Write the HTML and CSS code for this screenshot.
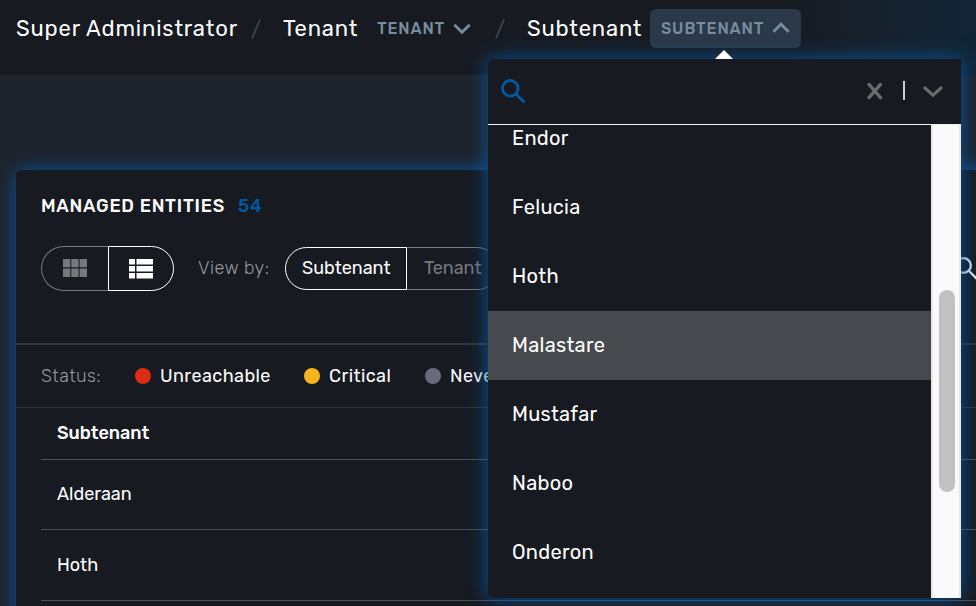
FILE: index.html
```html
<!DOCTYPE html>
<html lang="en">
<head>
<meta charset="utf-8">
<title>Managed Entities</title>
<link rel="stylesheet" href="styles.css">
</head>
<body>
<div class="app">
  <header class="crumbs">
    <span class="crumb crumb-admin">Super Administrator</span>
    <svg class="slash slash-first" viewBox="0 0 10 20"><path d="M1 19.5L9 .5"/></svg>
    <span class="crumb crumb-tenant">Tenant</span>
    <button class="switch switch-tenant"><span class="switch-label label-tenant">TENANT</span><svg viewBox="0 0 16 11"><path d="M1 1.5L8 8.5L15 1.5"/></svg></button>
    <svg class="slash slash-second" viewBox="0 0 10 20"><path d="M1 19.5L9 .5"/></svg>
    <span class="crumb crumb-subtenant">Subtenant</span>
    <button class="switch switch-open"><span class="switch-label label-subtenant">SUBTENANT</span><svg viewBox="0 0 16 11"><path d="M1 9L8 2L15 9"/></svg></button>
  </header>
  <main class="content">
    <section class="panel">
      <div class="panel-head">
        <h1 class="title"><span class="title-text">MANAGED ENTITIES</span><span class="count">54</span></h1>
        <div class="toolbar">
          <div class="toggle view-toggle">
            <button class="left"><svg viewBox="0 0 24 20"><path d="M0 0h7.3v8.3H0zM8.3 0h7.3v8.3H8.3zM16.6 0H24v8.3h-7.4zM0 9.5h7.3V18H0zM8.3 9.5h7.3V18H8.3zM16.6 9.5H24V18h-7.4z"/></svg></button>
            <button class="right active"><svg viewBox="0 0 24 20"><path d="M0 0h6v5.5H0zM7.5 0H24v5.5H7.5zM0 7h6v5.5H0zM7.5 7H24v5.5H7.5zM0 14h6v5.5H0zM7.5 14H24v5.5H7.5z"/></svg></button>
          </div>
          <span class="viewby">View by:</span>
          <div class="toggle group-toggle">
            <button class="left active"><span class="group-subtenant">Subtenant</span></button>
            <button class="right"><span class="group-tenant">Tenant</span></button>
          </div>
          <svg class="panel-search" viewBox="0 0 24 24"><circle cx="8.5" cy="8.5" r="7.3"/><path d="M14 14L22 22"/></svg>
        </div>
      </div>
      <div class="status">
        <span class="status-title">Status:</span>
        <span class="dot red"></span><span class="status-name unreachable">Unreachable</span>
        <span class="dot amber"></span><span class="status-name critical">Critical</span>
        <span class="dot grey"></span><span class="status-name">Never</span>
      </div>
      <div class="table">
        <div class="row head"><span class="cell-head">Subtenant</span></div>
        <div class="row first"><span class="cell-alderaan">Alderaan</span></div>
        <div class="row"><span class="cell-hoth">Hoth</span></div>
      </div>
    </section>
  </main>
  <div class="dropdown">
    <i class="arrow"></i>
    <div class="search-row">
      <svg class="search" viewBox="0 0 25 25"><circle cx="9.3" cy="9.3" r="7.8"/><path d="M15 15L23.5 23.5"/></svg>
      <svg class="clear" viewBox="0 0 16 18"><path d="M2 2.4L13.5 15.6M13.5 2.4L2 15.6"/></svg>
      <i class="divider"></i>
      <svg class="chevron" viewBox="0 0 20 12"><path d="M2 2L10 9.2L18 2"/></svg>
    </div>
    <div class="list">
      <ul class="options">
        <li><span>Endor</span></li>
        <li><span>Felucia</span></li>
        <li><span>Hoth</span></li>
        <li class="selected"><span>Malastare</span></li>
        <li><span>Mustafar</span></li>
        <li><span>Naboo</span></li>
        <li><span>Onderon</span></li>
      </ul>
      <div class="track"><div class="thumb"></div></div>
    </div>
  </div>
</div>
</body>
</html>
```
FILE: styles.css
```css
* { box-sizing: border-box; }
body { margin: 0; background: #1f232b; color: #fff; font-family: Rubik, Roboto, sans-serif; }
button { margin: 0; padding: 0; border: 0; background: none; color: inherit; font: inherit; }
svg { display: block; flex: none; fill: none; }
.app { position: relative; width: 976px; height: 606px; overflow: hidden; }
.crumbs { display: flex; align-items: center; height: 75px; padding: 0 0 19px 16px; background: linear-gradient(90deg, #171a21 0 81%, #17202a 88%, #122537 100%); white-space: nowrap; }
.crumb { flex: none; padding-top: 2px; font-size: 22px; line-height: 28px; }
.crumb-admin { width: 235px; letter-spacing: .84px; }
.slash { width: 10px; height: 20px; margin-top: 2px; stroke: #45484d; stroke-width: 1.6; }
.slash-first { margin-right: 22px; }
.crumb-tenant { width: 94px; letter-spacing: .84px; }
.switch { display: flex; flex: none; align-items: center; color: #778da0; font-size: 16px; font-weight: 500; }
.switch-label { flex: none; letter-spacing: .85px; text-align: left; }
.switch svg { width: 18px; height: 12px; stroke: #778da0; stroke-width: 2.6; }
.label-tenant { width: 76px; }
.switch-tenant { width: 118px; }
.switch-tenant svg { margin-top: 2px; }
.slash-second { margin-right: 22px; }
.crumb-subtenant { width: 123px; letter-spacing: .8px; }
.switch-open { width: 151px; height: 39px; padding-left: 11px; border-radius: 6px; background: #2b3848; }
.label-subtenant { width: 111px; }
.content { padding: 95px 0 0 16px; }
.panel { width: 980px; height: 460px; border-radius: 6px 0 0; background: #171a21; box-shadow: 0 0 20px #07569f; }
.panel-head { height: 175px; padding: 25px 0 0 25px; border-bottom: 2px solid #33363b; }
.title { display: flex; margin: 0; height: 22px; align-items: center; font-size: 18px; font-weight: 500; }
.title-text { width: 197px; letter-spacing: .76px; }
.count { color: #0457a1; letter-spacing: .8px; }
.toolbar { display: flex; align-items: center; height: 45px; margin-top: 29px; font-size: 18px; }
.toggle { display: flex; flex: none; }
.toggle button { display: flex; align-items: center; border: 1px solid #77797c; color: #77797c; }
.toggle .active { border-color: #fff; color: #fff; }
.toggle .left { border-radius: 23px 0 0 23px; border-right: 0; }
.toggle .right { border-radius: 0 23px 23px 0; }
.view-toggle { width: 133px; height: 45px; }
.view-toggle .left { width: 67px; padding-left: 21px; }
.view-toggle .right { width: 66px; padding-left: 20px; }
.view-toggle svg { width: 24px; height: 20px; fill: currentColor; }
.viewby { width: 87px; margin-left: 24px; padding-bottom: 1px; color: #97999c; font-weight: 300; letter-spacing: .5px; white-space: nowrap; }
.group-toggle { height: 43px; }
.group-toggle span { padding-bottom: 2px; }
.toggle.group-toggle .left { width: 122px; padding-left: 16px; border-right: 1px solid #fff; letter-spacing: 0; }
.group-toggle .right { width: 92px; padding-left: 17px; border-left: 0; letter-spacing: 0; }
.panel-search { width: 24px; height: 24px; margin-left: 456px; stroke: #e5eaf0; stroke-width: 2.3; }
.status { display: flex; align-items: center; height: 63px; padding-left: 25px; border-bottom: 1px solid #303338; font-size: 18px; letter-spacing: .42px; white-space: nowrap; }
.status-title { width: 93.5px; color: #97999c; font-weight: 300; }
.dot { flex: none; width: 16px; height: 16px; margin-right: 9.5px; border-radius: 50%; }
.red { background: #dc2c12; }
.amber { background: #f8b31d; }
.grey { background: #666c7e; }
.unreachable { width: 143.5px; }
.critical { width: 95.5px; }
.table { padding-left: 25px; }
.row { display: flex; align-items: center; height: 71px; padding: 0 0 0 16px; border-bottom: 1px solid #4d4f52; font-size: 18px; letter-spacing: 0; }
.row.first { height: 70px; padding-bottom: 2px; }
.row.head { height: 52px; padding-bottom: 2px; font-weight: 500; }
.dropdown { position: absolute; left: 488px; top: 59px; width: 473px; height: 539px; border-radius: 6px 0 6px 6px; background: #171a21; box-shadow: 0 0 20px #07569f; }
.arrow { position: absolute; left: 227px; top: -9px; border: solid transparent; border-width: 0 9px 9px; border-bottom-color: #fff; }
.search-row { display: flex; align-items: center; height: 66px; padding: 0 0 1px 13px; border-bottom: 1px solid #f0f0f0; }
.search { width: 25px; height: 25px; stroke: #0457a1; stroke-width: 2.8; }
.clear { width: 16px; height: 18px; margin-left: 341px; stroke: #6b6b6b; stroke-width: 3.3; stroke-linecap: round; }
.divider { width: 2px; height: 19px; margin: 0 0 1px 20px; background: #ccc; }
.chevron { width: 20px; height: 12px; margin: 1px 0 0 18px; stroke: #6b6b6b; stroke-width: 3.2; stroke-linecap: round; }
.list { display: flex; height: 473px; overflow: hidden; }
.options { width: 443px; margin: -21px 0 0; padding: 0; list-style: none; }
.options li { display: flex; align-items: center; height: 69px; padding: 0 0 2px 24px; font-size: 20px; letter-spacing: .3px; }
.options .selected { background: #46494d; }
.track { width: 30px; height: 473px; padding: 165px 0 0 8px; background: #fafafa; border: solid #e8e8e8; border-width: 0 2px; }
.thumb { width: 16px; height: 202px; margin-left: -2px; border-radius: 8px; background: #c1c1c1; }
```
